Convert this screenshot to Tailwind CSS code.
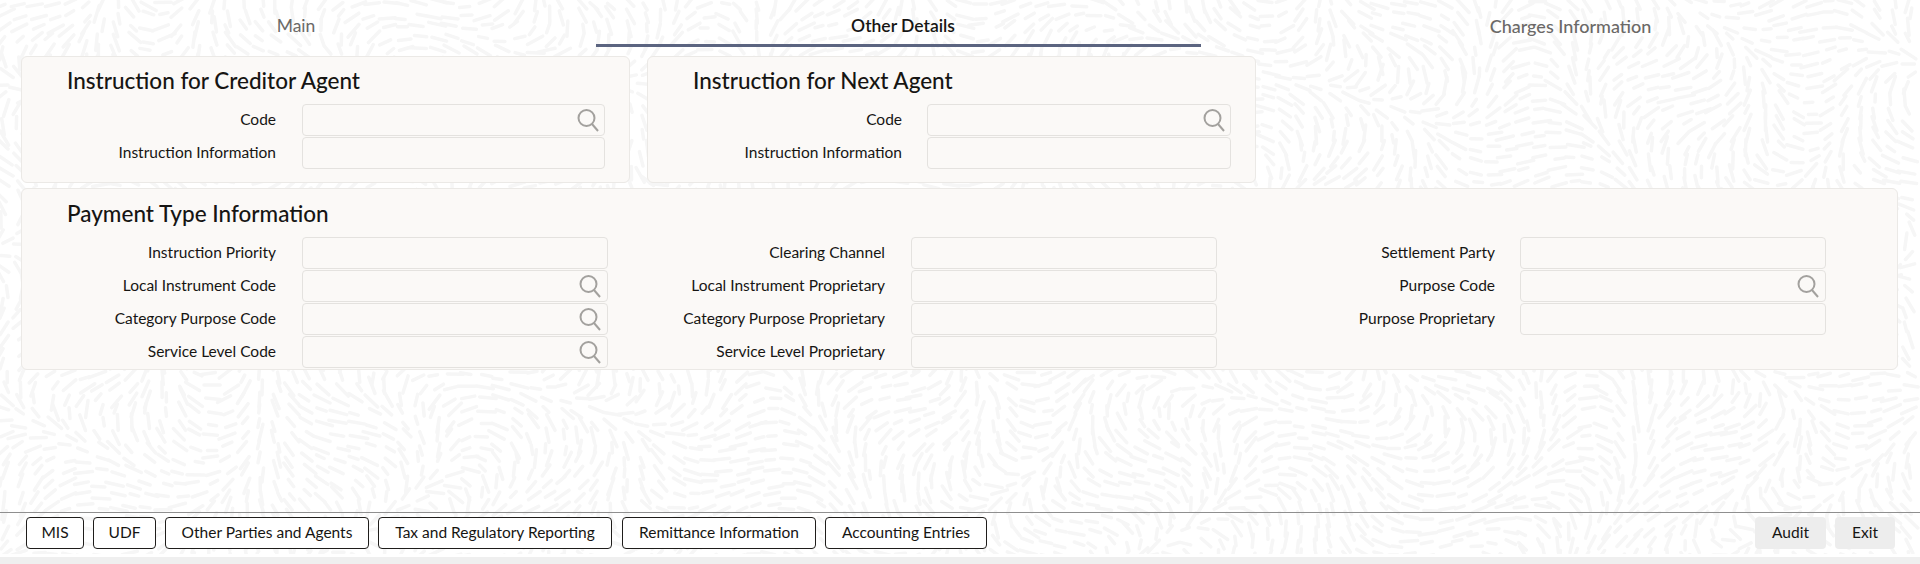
<!DOCTYPE html>
<html lang="en">
<head>
<meta charset="UTF-8">
<title>Other Details</title>
<script src="https://cdn.jsdelivr.net/npm/@tailwindcss/browser@4"></script>
</head>
<body class="bg-white font-['Lato',sans-serif] text-[#161513] overflow-hidden">
<div class="relative w-[1920px] h-[564px] flex flex-col overflow-hidden">
  <!-- texture -->
  <svg id="texture" class="absolute inset-0" width="1920" height="557" aria-hidden="true"></svg>

  <div class="relative flex-1 flex flex-col">
    <!-- tabs -->
    <div class="flex h-[47px]">
      <div class="w-[596px] shrink-0 pt-[15px] pr-[4px] text-center text-[17.5px] leading-[22px] text-[#6b6967]">Main</div>
      <div class="w-[605px] shrink-0 pt-[15px] pl-[9px] text-center text-[17.5px] leading-[22px] font-semibold border-b-[3px] border-[#5b6480]">Other Details</div>
      <div class="w-[719px] shrink-0 pt-[15px] pl-[20px] text-center text-[18px] leading-[22px] font-medium text-[#6b6967]">Charges Information</div>
    </div>

    <!-- top cards -->
    <div class="flex gap-[17px] ml-[21px] mt-[9px]">
      <section class="w-[609px] h-[127px] bg-[#fbf9f7] border border-[#ebe9e6] rounded-[6px]">
        <h2 class="ml-[45px] mt-[10px] text-[22.5px] leading-[28px] font-medium">Instruction for Creditor Agent</h2>
        <div class="mt-[9px] flex flex-col gap-[1px]">
          <div class="flex items-center h-[32px]">
            <label class="w-[254px] text-right text-[15.5px]">Code</label>
            <div class="ml-[26px] w-[303px] h-[32px] flex items-center justify-end pr-[4px] border border-[#e4e2df] rounded-[4px]">
              <svg width="24" height="24" viewBox="0 0 24 24" fill="none" stroke="#a3a19e" stroke-width="2"><circle cx="10.5" cy="10" r="8"/><path d="M16 16l6 7"/></svg>
            </div>
          </div>
          <div class="flex items-center h-[32px]">
            <label class="w-[254px] text-right text-[15.5px]">Instruction Information</label>
            <div class="ml-[26px] w-[303px] h-[32px] border border-[#e4e2df] rounded-[4px]"></div>
          </div>
        </div>
      </section>
      <section class="w-[609px] h-[127px] bg-[#fbf9f7] border border-[#ebe9e6] rounded-[6px]">
        <h2 class="ml-[45px] mt-[10px] text-[22.5px] leading-[28px] font-medium">Instruction for Next Agent</h2>
        <div class="mt-[9px] flex flex-col gap-[1px]">
          <div class="flex items-center h-[32px]">
            <label class="w-[254px] text-right text-[15.5px]">Code</label>
            <div class="ml-[25px] w-[304px] h-[32px] flex items-center justify-end pr-[4px] border border-[#e4e2df] rounded-[4px]">
              <svg width="24" height="24" viewBox="0 0 24 24" fill="none" stroke="#a3a19e" stroke-width="2"><circle cx="10.5" cy="10" r="8"/><path d="M16 16l6 7"/></svg>
            </div>
          </div>
          <div class="flex items-center h-[32px]">
            <label class="w-[254px] text-right text-[15.5px]">Instruction Information</label>
            <div class="ml-[25px] w-[304px] h-[32px] border border-[#e4e2df] rounded-[4px]"></div>
          </div>
        </div>
      </section>
    </div>

    <!-- payment type -->
    <section class="ml-[21px] mt-[5px] w-[1877px] h-[182px] bg-[#fbf9f7] border border-[#ebe9e6] rounded-[6px]">
      <h2 class="ml-[45px] mt-[11px] text-[22.5px] leading-[28px] font-medium">Payment Type Information</h2>
      <div class="mt-[9px] grid grid-cols-[254px_332px_277px_332px_278px_331px] gap-y-[1px] text-[15.5px]">
        <label class="h-[32px] flex items-center justify-end">Instruction Priority</label>
        <div class="ml-[26px] w-[306px] h-[32px] border border-[#e4e2df] rounded-[4px]"></div>
        <label class="h-[32px] flex items-center justify-end">Clearing Channel</label>
        <div class="ml-[26px] w-[306px] h-[32px] border border-[#e4e2df] rounded-[4px]"></div>
        <label class="h-[32px] flex items-center justify-end">Settlement Party</label>
        <div class="ml-[25px] w-[306px] h-[32px] border border-[#e4e2df] rounded-[4px]"></div>

        <label class="h-[32px] flex items-center justify-end">Local Instrument Code</label>
        <div class="ml-[26px] w-[306px] h-[32px] flex items-center justify-end pr-[5px] border border-[#e4e2df] rounded-[4px]">
          <svg width="24" height="24" viewBox="0 0 24 24" fill="none" stroke="#a3a19e" stroke-width="2"><circle cx="10.5" cy="10" r="8"/><path d="M16 16l6 7"/></svg>
        </div>
        <label class="h-[32px] flex items-center justify-end">Local Instrument Proprietary</label>
        <div class="ml-[26px] w-[306px] h-[32px] border border-[#e4e2df] rounded-[4px]"></div>
        <label class="h-[32px] flex items-center justify-end">Purpose Code</label>
        <div class="ml-[25px] w-[306px] h-[32px] flex items-center justify-end pr-[5px] border border-[#e4e2df] rounded-[4px]">
          <svg width="24" height="24" viewBox="0 0 24 24" fill="none" stroke="#a3a19e" stroke-width="2"><circle cx="10.5" cy="10" r="8"/><path d="M16 16l6 7"/></svg>
        </div>

        <label class="h-[32px] flex items-center justify-end">Category Purpose Code</label>
        <div class="ml-[26px] w-[306px] h-[32px] flex items-center justify-end pr-[5px] border border-[#e4e2df] rounded-[4px]">
          <svg width="24" height="24" viewBox="0 0 24 24" fill="none" stroke="#a3a19e" stroke-width="2"><circle cx="10.5" cy="10" r="8"/><path d="M16 16l6 7"/></svg>
        </div>
        <label class="h-[32px] flex items-center justify-end">Category Purpose Proprietary</label>
        <div class="ml-[26px] w-[306px] h-[32px] border border-[#e4e2df] rounded-[4px]"></div>
        <label class="h-[32px] flex items-center justify-end">Purpose Proprietary</label>
        <div class="ml-[25px] w-[306px] h-[32px] border border-[#e4e2df] rounded-[4px]"></div>

        <label class="h-[32px] flex items-center justify-end">Service Level Code</label>
        <div class="ml-[26px] w-[306px] h-[32px] flex items-center justify-end pr-[5px] border border-[#e4e2df] rounded-[4px]">
          <svg width="24" height="24" viewBox="0 0 24 24" fill="none" stroke="#a3a19e" stroke-width="2"><circle cx="10.5" cy="10" r="8"/><path d="M16 16l6 7"/></svg>
        </div>
        <label class="h-[32px] flex items-center justify-end">Service Level Proprietary</label>
        <div class="ml-[26px] w-[306px] h-[32px] border border-[#e4e2df] rounded-[4px]"></div>
      </div>
    </section>

    <!-- footer -->
    <div class="mt-auto h-[42px] border-t border-[#8f8f8f] flex items-start pt-[4px] pl-[26px] pr-[25px] gap-[9px] text-[15.5px]">
      <button class="w-[58px] h-[32px] bg-white border border-[#1f1d1b] rounded-[4px]">MIS</button>
      <button class="w-[63px] h-[32px] bg-white border border-[#1f1d1b] rounded-[4px]">UDF</button>
      <button class="w-[204px] h-[32px] bg-white border border-[#1f1d1b] rounded-[4px]">Other Parties and Agents</button>
      <button class="w-[234px] h-[32px] bg-white border border-[#1f1d1b] rounded-[4px]">Tax and Regulatory Reporting</button>
      <button class="ml-[1px] w-[194px] h-[32px] bg-white border border-[#1f1d1b] rounded-[4px]">Remittance Information</button>
      <button class="w-[162px] h-[32px] bg-white border border-[#1f1d1b] rounded-[4px]">Accounting Entries</button>
      <button class="ml-auto w-[71px] h-[32px] bg-[#ededed] rounded-[4px]">Audit</button>
      <button class="w-[60px] h-[32px] bg-[#ededed] rounded-[4px]">Exit</button>
    </div>
    <div class="h-[3px] bg-white"></div>
  </div>
  <div class="relative h-[7px] bg-[#efefef]"></div>
</div>
<script>
// soft dash texture, angle follows a slow wave field
var svg = document.getElementById('texture');
var seed = 7;
function rnd() { seed = (seed * 16807) % 2147483647; return seed / 2147483647; }
var out = '';
for (var y = 0; y < 557; y += 12) {
  for (var x = 0; x < 1920; x += 16) {
    var a = Math.sin(x / 62 + Math.cos(y / 48)) * 1.6 + Math.cos(y / 60 + x / 150) * 1.4;
    var px = x + rnd() * 8, py = y + rnd() * 7, l = 4 + rnd() * 5;
    var dx = Math.cos(a) * l, dy = Math.sin(a) * l;
    out += '<line x1="' + (px - dx).toFixed(1) + '" y1="' + (py - dy).toFixed(1) + '" x2="' + (px + dx).toFixed(1) + '" y2="' + (py + dy).toFixed(1) + '"/>';
  }
}
svg.innerHTML = '<g stroke="#f6f6f6" stroke-width="3.5" stroke-linecap="round">' + out + '</g>';
</script>
</body>
</html>
